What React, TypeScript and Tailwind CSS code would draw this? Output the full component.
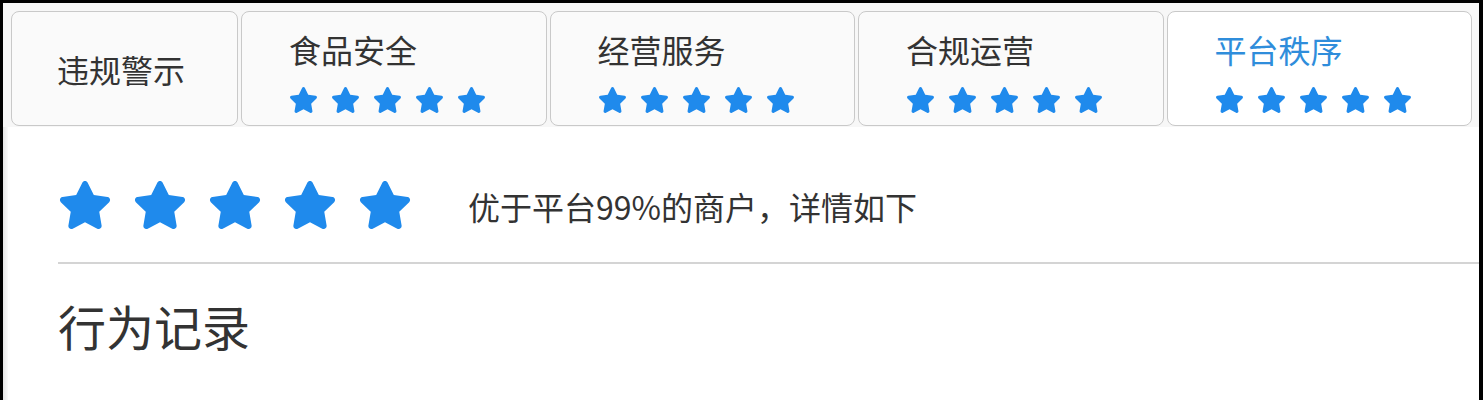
import React from "react";

const STAR =
  "M259.3 17.8L194 150.2 47.9 171.5c-26.2 3.8-36.7 36.1-17.7 54.6l105.7 103-25 145.5c-4.5 26.3 23.2 46 46.4 33.7L288 439.6l130.7 68.7c23.2 12.2 50.9-7.4 46.4-33.7l-25-145.5 105.7-103c19-18.5 8.5-50.8-17.7-54.6L382 150.2 316.7 17.8c-11.7-23.6-45.6-23.9-57.4 0z";

function Star({ className }: { className: string }) {
  return (
    <svg viewBox="0 0 576 512" className={className} fill="#1f8aec">
      <path d={STAR} />
    </svg>
  );
}

function SmallStars() {
  return (
    <div className="flex gap-[13px] mt-[14px]">
      {[0, 1, 2, 3, 4].map((i) => (
        <Star key={i} className="w-[29px] h-[26px] shrink-0" />
      ))}
    </div>
  );
}

const tabs = [
  { name: "食品安全", active: false },
  { name: "经营服务", active: false },
  { name: "合规运营", active: false },
  { name: "平台秩序", active: true },
];

export default function App() {
  return (
    <div
      className="w-full h-[400px] bg-black pt-[3px] pl-[3px] pr-[4px] flex"
      style={{ fontFamily: '"Noto Sans CJK SC", "Noto Sans", sans-serif' }}
    >
      <div className="flex-1 flex flex-col bg-white overflow-hidden">
        <div className="bg-[#f7f7f7] flex gap-[3px] pl-[8px] pr-[7px] pt-[8px] pb-[1px]">
          <div className="w-[227px] h-[115px] shrink-0 rounded-[8px] border border-[#c9c9c9] bg-[#fafafa] flex items-center pl-[45px]">
            <span className="text-[32px] leading-[48px] text-[#333]">违规警示</span>
          </div>
          {tabs.map((t) => (
            <div
              key={t.name}
              className={
                "flex-1 h-[115px] rounded-[8px] border border-[#c9c9c9] flex flex-col pl-[47px] pt-[13px] " +
                (t.active ? "bg-white" : "bg-[#fafafa]")
              }
            >
              <span
                className={
                  "text-[32px] leading-[48px] " +
                  (t.active ? "text-[#2f8ddb]" : "text-[#333]")
                }
              >
                {t.name}
              </span>
              <SmallStars />
            </div>
          ))}
        </div>
        <div className="flex-1 flex">
          <div className="w-[5px] bg-gradient-to-r from-[#e6e6e6] to-[#fbfbfb]" />
          <div className="flex-1 flex flex-col pl-[50px]">
            <div className="flex items-center mt-[51px] h-[54px]">
              <div className="flex gap-[21px]">
                {[0, 1, 2, 3, 4].map((i) => (
                  <Star key={i} className="w-[54px] h-[48px] shrink-0" />
                ))}
              </div>
              <span className="ml-[56px] text-[32px] leading-[48px] text-[#333] pt-[2px]">
                优于平台99%的商户，详情如下
              </span>
            </div>
            <div className="mt-[30px] h-[2px] bg-[#d4d4d4]" />
            <div className="mt-[25px] text-[48px] leading-[72px] text-[#333]">行为记录</div>
          </div>
        </div>
      </div>
    </div>
  );
}
